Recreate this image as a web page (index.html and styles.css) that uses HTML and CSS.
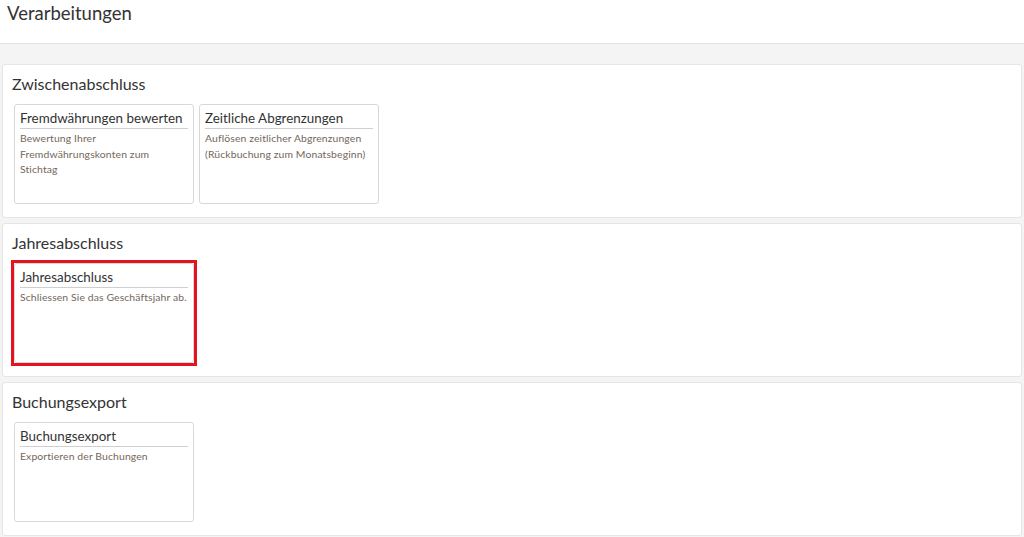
FILE: index.html
```html
<!DOCTYPE html>
<html lang="de">
<head>
  <meta charset="UTF-8">
  <meta name="viewport" content="width=device-width, initial-scale=1.0">
  <title>Verarbeitungen</title>
  <link rel="stylesheet" href="styles.css">
</head>
<body>
  <header class="page-header">
    <h1>Verarbeitungen</h1>
  </header>

  <main class="content">
    <section class="panel">
      <h2 class="panel-title">Zwischenabschluss</h2>
      <div class="cards">
        <div class="card">
          <div class="card-title">Fremdwährungen bewerten</div>
          <div class="card-text">Bewertung Ihrer Fremdwährungskonten zum Stichtag</div>
        </div>
        <div class="card">
          <div class="card-title">Zeitliche Abgrenzungen</div>
          <div class="card-text">Auflösen zeitlicher Abgrenzungen (Rückbuchung zum Monatsbeginn)</div>
        </div>
      </div>
    </section>

    <section class="panel">
      <h2 class="panel-title">Jahresabschluss</h2>
      <div class="cards">
        <div class="selected-frame">
          <div class="card">
            <div class="card-title">Jahresabschluss</div>
            <div class="card-text">Schliessen Sie das Geschäftsjahr ab.</div>
          </div>
        </div>
      </div>
    </section>

    <section class="panel">
      <h2 class="panel-title">Buchungsexport</h2>
      <div class="cards">
        <div class="card">
          <div class="card-title">Buchungsexport</div>
          <div class="card-text">Exportieren der Buchungen</div>
        </div>
      </div>
    </section>
  </main>
</body>
</html>
```

FILE: styles.css
```css
body {
  font-family: 'Lato', 'Noto Sans', sans-serif;
  background-color: #f4f4f4;
  color: #333;
  margin: 0;
  padding: 0;
}

.page-header {
  background-color: #fff;
  height: 43px;
  border-bottom: 1px solid #e2e2e2;
  padding: 0 7px;
}

.page-header h1 {
  margin: 0;
  font-size: 18.5px;
  font-weight: normal;
  line-height: 26px;
  color: #333;
}

.content {
  padding: 20px 2px 0 2px;
}

.panel {
  background-color: #fff;
  border: 1px solid #e6e6e6;
  border-radius: 3px;
  padding: 9px 11px 13px 11px;
  margin-bottom: 5px;
}

.panel-title {
  margin: 0 0 10px -2px;
  font-size: 16px;
  font-weight: normal;
  line-height: 20px;
  color: #333;
}

.cards {
  display: flex;
  gap: 5px;
}

.card {
  width: 180px;
  height: 100px;
  box-sizing: border-box;
  border: 1px solid #d8d8d8;
  border-radius: 3px;
  padding: 4px 5px;
  background-color: #fff;
}

.selected-frame {
  border: 3px solid #e3141d;
  margin: -3px;
}

.card-title {
  font-size: 13.4px;
  line-height: 18px;
  padding-bottom: 1px;
  border-bottom: 1px solid #cfcfcf;
  color: #333;
}

.card-text {
  font-size: 10.4px;
  line-height: 15.5px;
  letter-spacing: 0.12px;
  padding-top: 2px;
  color: #74665a;
}
```
